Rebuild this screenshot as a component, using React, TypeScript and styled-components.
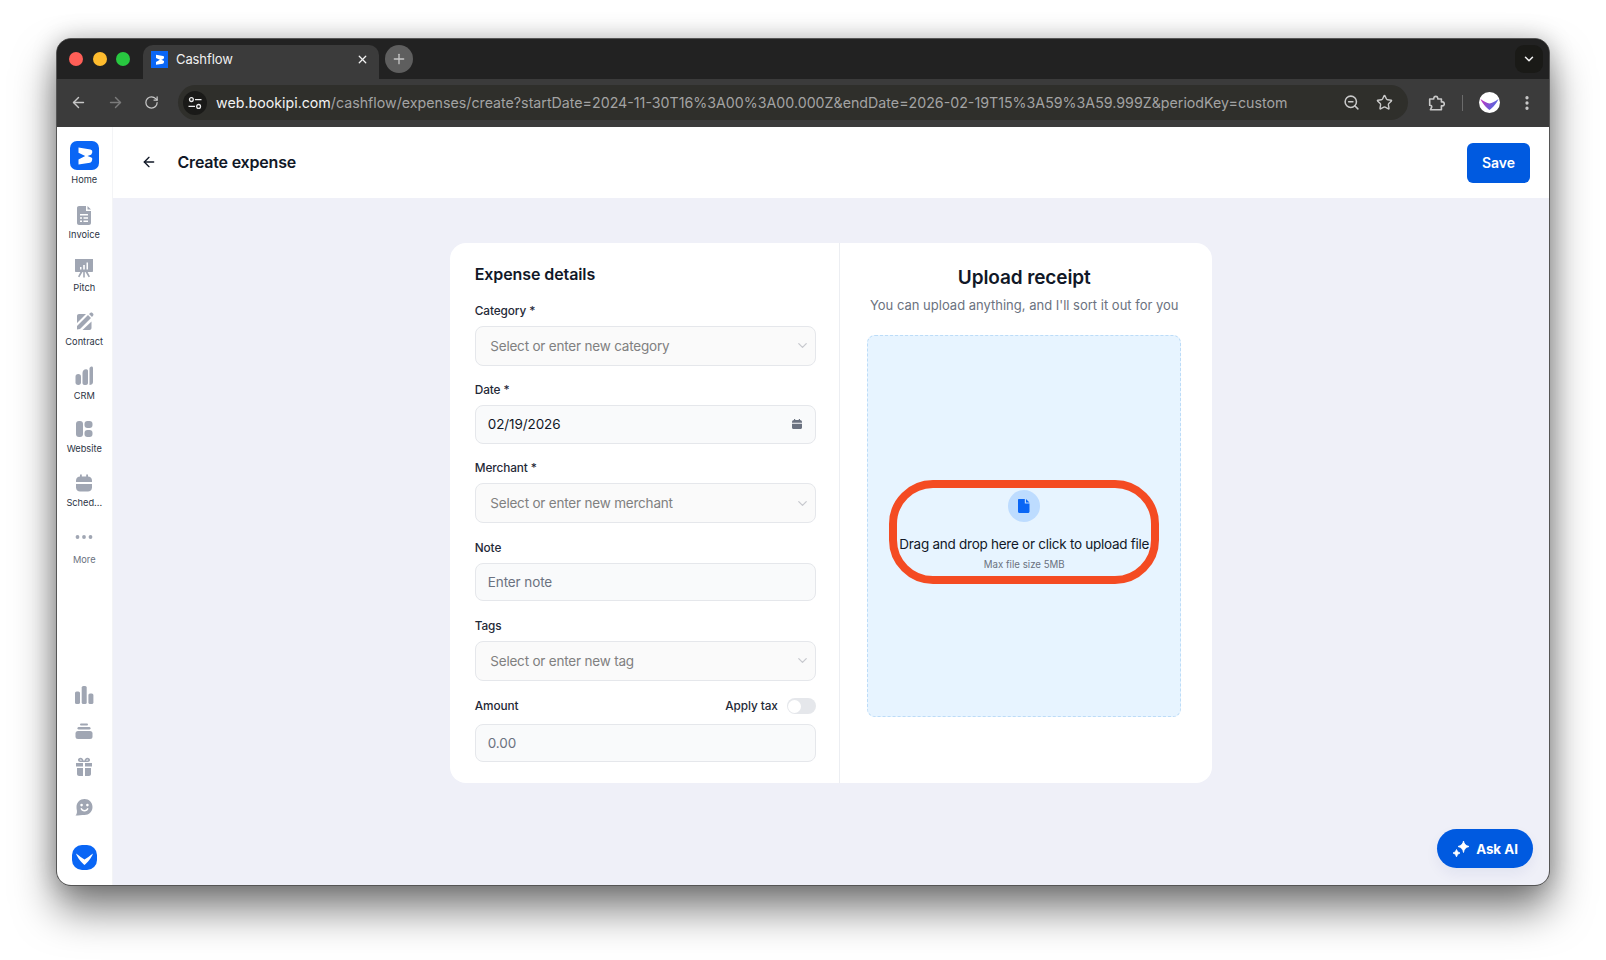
import React from 'react';
import styled, { createGlobalStyle } from 'styled-components';
import {
  ArrowLeft,
  ArrowRight,
  ChevronDown,
  EllipsisVertical,
  Plus,
  RotateCw,
  Star,
  X,
  ZoomOut
} from 'lucide-react';

const GlobalStyle = createGlobalStyle`
  html, body {
    margin: 0;
    padding: 0;
    background: #fff;
    font-family: Inter, "Liberation Sans", sans-serif;
    overflow: hidden;
  }
  * { box-sizing: border-box; }
`;

const URL_HOST = 'web.bookipi.com';
const URL_PATH =
  '/cashflow/expenses/create?startDate=2024-11-30T16%3A00%3A00.000Z&endDate=2026-02-19T15%3A59%3A59.999Z&periodKey=custom';

const BrandMark: React.FC<{ size: number }> = ({ size }) => (
  <svg width={size} height={size} viewBox="0 0 29 29">
    <rect width="29" height="29" rx={size > 20 ? 7 : 0} fill="#0a66f5" />
    <path d="M8.5 6.5L20.5 8.5Q22.8 9 22.3 11.2L21.6 13Q21.2 13.8 20.2 14.1L17.5 15L21.4 16.6Q22.6 17.2 22.2 18.8L21.6 20.5Q21.2 21.6 20 21.8L8.5 23.5V18.6L15.2 15L8.5 11.8Z" fill="#fff" />
  </svg>
);

const ChevronBadge: React.FC = () => (
  <svg width="25" height="25" viewBox="0 0 25 25">
    <rect width="25" height="25" rx="10" fill="#0a66f5" />
    <path d="M4 8.5C7.5 11 10 13 12.5 14.5C15 13 17.5 11 21 8.5C19.5 13 15.5 17.5 12.5 20C9.5 17.5 5.5 13 4 8.5Z" fill="#fff" />
  </svg>
);

const sidebarIcons: Record<string, React.ReactNode> = {
  Invoice: (
    <path
      fillRule="evenodd"
      d="M6 2H13V7H18V19C18 20.1 17.1 21 16 21H6C4.9 21 4 20.1 4 19V4C4 2.9 4.9 2 6 2ZM14.5 2L18 5.5H14.5ZM7 10V11.5H15V10ZM7 13.2V14.7H9V13.2ZM10.5 13.2V14.7H15V13.2ZM7 16.4V17.9H9V16.4ZM10.5 16.4V17.9H15V16.4Z"
    />
  ),
  Pitch: (
    <path
      fillRule="evenodd"
      d="M2 2H20V14C20 14.6 19.6 15 19 15H14.6L17 19.5L15.6 20.2L12.5 15H11.8V20.5H10.2V15H9.5L6.4 20.2L5 19.5L7.4 15H3C2.4 15 2 14.6 2 14ZM7 10V12.5H8.5V10ZM10.2 8V12.5H11.8V8ZM13.5 5.5V12.5H15V5.5Z"
    />
  ),
  Contract: (
    <path d="M4 5C4 3.9 4.9 3 6 3H13L4 12ZM4 15L15 4L18 7L7 18L4 18.5ZM19 6L16 3L17.5 1.8C18 1.4 18.7 1.4 19.2 1.8L20.2 2.8C20.6 3.3 20.6 4 20.2 4.5ZM18.5 10.5V17C18.5 18.1 17.6 19 16.5 19H9.5Z" />
  ),
  CRM: (
    <g>
      <rect x="2.5" y="9" width="5.5" height="11" rx="2.75" />
      <path d="M9.5 8C9.5 5.5 11 4.5 13 4.2C14.2 4 15 4.8 15 6V18C15 19.2 14 20 13 20H11.5C10.4 20 9.5 19.1 9.5 18Z" />
      <path d="M16.5 3.5C16.5 2.5 17.5 1.5 18.5 1.5C19.5 1.5 20 2.2 20 3.2V17C20 19 18.5 20 16.5 20Z" />
    </g>
  ),
  Website: (
    <g>
      <rect x="3" y="3" width="7" height="16" rx="3" />
      <rect x="11.5" y="3" width="8" height="7" rx="3" />
      <rect x="11.5" y="12" width="8" height="7" rx="3" />
    </g>
  ),
  Schedule: (
    <g>
      <path d="M3 8.5C3 6 5 4.5 7 4.5V2.5H8.8V4.5H13.2V2.5H15V4.5C17 4.5 19 6 19 8.5V10H3Z" />
      <path d="M3 12H19V15.5C19 18 17 19.5 15 19.5H7C5 19.5 3 18 3 15.5Z" />
    </g>
  ),
  More: (
    <g>
      <circle cx="4.5" cy="11" r="1.9" />
      <circle cx="11" cy="11" r="1.9" />
      <circle cx="17.5" cy="11" r="1.9" />
    </g>
  )
};

const bottomIcons: { key: string; top: number; icon: React.ReactNode }[] = [
  {
    key: 'stats',
    top: 0,
    icon: (
      <g>
        <rect x="2" y="7.5" width="5" height="12.5" rx="1.6" />
        <rect x="8.7" y="2" width="5" height="18" rx="1.6" />
        <rect x="15.4" y="9.5" width="5" height="10.5" rx="1.6" />
      </g>
    )
  },
  {
    key: 'stack',
    top: 14,
    icon: (
      <g>
        <rect x="7" y="3.5" width="8" height="2" rx="1" />
        <rect x="4.5" y="7" width="13" height="2.5" rx="1.2" />
        <rect x="2.5" y="11" width="17" height="8" rx="2.5" />
      </g>
    )
  },
  {
    key: 'gift',
    top: 14,
    icon: (
      <path
        fillRule="evenodd"
        d="M3 7H10V10.5H3ZM12 7H19V10.5H12ZM4 12H10V20H6C5 20 4 19 4 18ZM12 12H18V18C18 19 17 20 16 20H12ZM7.5 1.8C9.2 1.8 10.4 3.5 11 5.5C11.6 3.5 12.8 1.8 14.5 1.8C16.2 1.8 17.2 3 17 4.3C16.8 5.4 16 6 15 6H7C6 6 5.2 5.4 5 4.3C4.8 3 5.8 1.8 7.5 1.8ZM7.4 3.4C6.7 3.4 6.4 4.4 7.4 4.5H9C8.6 3.9 8 3.4 7.4 3.4ZM14.6 3.4C14 3.4 13.4 3.9 13 4.5H14.6C15.6 4.4 15.3 3.4 14.6 3.4Z"
      />
    )
  },
  {
    key: 'chat',
    top: 18,
    icon: (
      <path
        fillRule="evenodd"
        d="M11.5 3C16 3 19.5 6.5 19.5 11C19.5 15.5 16 19 11.5 19C8.8 19 5.5 19.5 2.5 19.5C3.5 18.5 4.2 17 3.9 14.5C3.6 13.5 3.5 12.2 3.5 11C3.5 6.5 7 3 11.5 3ZM8.6 7.8A1.3 1.3 0 1 0 8.6 10.4A1.3 1.3 0 1 0 8.6 7.8ZM14.4 7.8A1.3 1.3 0 1 0 14.4 10.4A1.3 1.3 0 1 0 14.4 7.8ZM7.4 12.4C8 14.4 9.6 15.4 11.5 15.4C13.4 15.4 15 14.4 15.6 12.4L14.2 12.1C13.7 13.4 12.8 14 11.5 14C10.2 14 9.3 13.4 8.8 12.1Z"
      />
    )
  }
];

const sidebarItems = [
  { label: 'Invoice', icon: 'Invoice' },
  { label: 'Pitch', icon: 'Pitch' },
  { label: 'Contract', icon: 'Contract' },
  { label: 'CRM', icon: 'CRM' },
  { label: 'Website', icon: 'Website' },
  { label: 'Sched...', icon: 'Schedule' },
  { label: 'More', icon: 'More' }
];

const App: React.FC = () => {
  return (
    <>
      <GlobalStyle />
      <Desktop>
        <Window>
          <TabStrip>
            <TrafficLights>
              <Light $color="#ff5f57" />
              <Light $color="#febc2e" />
              <Light $color="#28c840" />
            </TrafficLights>
            <Tab>
              <BrandMark size={17} />
              <TabTitle>Cashflow</TabTitle>
              <X size={13} color="#f2f2f2" strokeWidth={2.4} />
            </Tab>
            <NewTab>
              <Plus size={16} color="#c6c6c6" strokeWidth={2} />
            </NewTab>
            <TabSearch>
              <ChevronDown size={14} color="#f0f0f0" strokeWidth={2.6} />
            </TabSearch>
          </TabStrip>

          <Toolbar>
            <NavButtons>
              <ArrowLeft size={17} color="#c7c7c7" strokeWidth={2} />
              <ArrowRight size={17} color="#7b7b7b" strokeWidth={2} />
              <RotateCw size={15} color="#c7c7c7" strokeWidth={2} />
            </NavButtons>
            <Omnibox>
              <SiteInfo>
                <svg width="14" height="14" viewBox="0 0 14 14" fill="none" stroke="#eee" strokeWidth="1.3">
                  <circle cx="3.4" cy="3.6" r="1.9" />
                  <path d="M7 3.6H13.5M0.5 10.4H7" />
                  <circle cx="10.6" cy="10.4" r="1.9" />
                </svg>
              </SiteInfo>
              <UrlText>
                <UrlHost>{URL_HOST}</UrlHost>
                {URL_PATH}
              </UrlText>
              <OmniIcons>
                <ZoomOut size={17} color="#c9c9c9" strokeWidth={2.2} />
                <Star size={17} color="#c9c9c9" strokeWidth={2} />
              </OmniIcons>
            </Omnibox>
            <ToolbarEnd>
              <svg width="18" height="18" viewBox="0 0 20 20" fill="none" stroke="#c9c9c9" strokeWidth="1.8" strokeLinejoin="round">
                <path d="M3 5.5H7.5V4.5A2.3 2.3 0 0 1 12 4.5V5.5H16V8.8H17A2.2 2.2 0 0 1 17 13.2H16V17.5H3.8L5.2 14.6A1.8 1.8 0 0 0 3 12.5Z" />
              </svg>
              <ToolbarDivider />
              <svg width="21" height="21" viewBox="0 0 21 21">
                <defs>
                  <linearGradient id="avatarFill" x1="0" y1="0" x2="1" y2="0.4">
                    <stop offset="0" stopColor="#c92fc0" />
                    <stop offset="1" stopColor="#4f6ce0" />
                  </linearGradient>
                </defs>
                <circle cx="10.5" cy="10.5" r="10.5" fill="#fff" />
                <path d="M1.5 7C5 9.5 8 11 10.5 11.5C13 11 16 9.5 19.5 7C18 11 14 15.5 10.5 18C7 15.5 3 11 1.5 7Z" fill="url(#avatarFill)" />
              </svg>
              <KebabSlot>
                <EllipsisVertical size={18} color="#c9c9c9" strokeWidth={2.4} />
              </KebabSlot>
            </ToolbarEnd>
          </Toolbar>

          <AppBody>
            <Sidebar>
              <HomeItem>
                <BrandMark size={29} />
                <NavLabel>Home</NavLabel>
              </HomeItem>
              {sidebarItems.map((item) => (
                <NavItem key={item.label}>
                  <NavIcon viewBox="0 0 22 22">{sidebarIcons[item.icon]}</NavIcon>
                  <NavLabel $muted={item.label === 'More'}>{item.label}</NavLabel>
                </NavItem>
              ))}
              <SidebarBottom>
                {bottomIcons.map((item) => (
                  <BottomIcon key={item.key} $top={item.top} viewBox="0 0 22 22">
                    {item.icon}
                  </BottomIcon>
                ))}
                <BadgeSlot>
                  <ChevronBadge />
                </BadgeSlot>
              </SidebarBottom>
            </Sidebar>

            <Main>
              <PageHeader>
                <HeaderTitle>
                  <ArrowLeft size={16} color="#111827" strokeWidth={2} />
                  <PageTitle>Create expense</PageTitle>
                </HeaderTitle>
                <SaveButton>Save</SaveButton>
              </PageHeader>

              <Content>
                <Card>
                  <DetailsColumn>
                    <SectionTitle>Expense details</SectionTitle>
                    <Fields>
                      <Field>
                        <FieldLabel>Category *</FieldLabel>
                        <SelectBox>
                          <span>Select or enter new category</span>
                          <ChevronDown size={15} color="#c7c9ce" />
                        </SelectBox>
                      </Field>
                      <Field>
                        <FieldLabel>Date *</FieldLabel>
                        <InputBox $filled>
                          <span>02/19/2026</span>
                          <svg width="12" height="12" viewBox="0 0 12 12" fill="#6b7280">
                            <path d="M1 4C1 2.9 1.9 2 3 2V1H4.2V2H7.8V1H9V2C10.1 2 11 2.9 11 4V4.8H1ZM1 5.8H11V9.5C11 10.4 10.4 11 9.5 11H2.5C1.6 11 1 10.4 1 9.5Z" />
                          </svg>
                        </InputBox>
                      </Field>
                      <Field>
                        <FieldLabel>Merchant *</FieldLabel>
                        <SelectBox>
                          <span>Select or enter new merchant</span>
                          <ChevronDown size={15} color="#c7c9ce" />
                        </SelectBox>
                      </Field>
                      <Field>
                        <FieldLabel>Note</FieldLabel>
                        <InputBox>
                          <span>Enter note</span>
                        </InputBox>
                      </Field>
                      <Field>
                        <FieldLabel>Tags</FieldLabel>
                        <SelectBox>
                          <span>Select or enter new tag</span>
                          <ChevronDown size={15} color="#c7c9ce" />
                        </SelectBox>
                      </Field>
                      <Field>
                        <AmountRow>
                          <FieldLabel>Amount</FieldLabel>
                          <TaxToggle>
                            <FieldLabel>Apply tax</FieldLabel>
                            <Switch>
                              <SwitchKnob />
                            </Switch>
                          </TaxToggle>
                        </AmountRow>
                        <InputBox>
                          <span>0.00</span>
                        </InputBox>
                      </Field>
                    </Fields>
                  </DetailsColumn>

                  <UploadColumn>
                    <UploadTitle>Upload receipt</UploadTitle>
                    <UploadHint>You can upload anything, and I'll sort it out for you</UploadHint>
                    <DropZone>
                      <FileBadge>
                        <svg width="14" height="16" viewBox="0 0 14 16" fill="#0a66f5">
                          <path d="M2 1H7.8V5.5H12.5V13.5C12.5 14.4 11.9 15 11 15H2.5C1.6 15 1 14.4 1 13.5V2C1 1.4 1.4 1 2 1ZM9 1L12.5 4.4H9Z" />
                        </svg>
                      </FileBadge>
                      <DropText>Drag and drop here or click to upload file</DropText>
                      <DropNote>Max file size 5MB</DropNote>
                      <Highlight />
                    </DropZone>
                  </UploadColumn>
                </Card>
              </Content>

              <AskButton>
                <svg width="18" height="18" viewBox="0 0 18 18" fill="#fff">
                  <path d="M11.5 1Q12.2 5.3 17 6.5Q12.2 7.7 11.5 12.5Q10.8 7.7 6 6.5Q10.8 5.3 11.5 1Z" stroke="#fff" strokeWidth="0.8" strokeLinejoin="round" />
                  <path d="M4.5 9.5Q5 12.3 8 13Q5 13.7 4.5 16.8Q4 13.7 1 13Q4 12.3 4.5 9.5Z" stroke="#fff" strokeWidth="0.8" strokeLinejoin="round" />
                </svg>
                Ask AI
              </AskButton>
            </Main>
          </AppBody>
        </Window>
      </Desktop>
    </>
  );
};

const Desktop = styled.div`
  width: 1606px;
  height: 960px;
  padding: 38px 56px 74px 56px;
`;

const Window = styled.div`
  width: 100%;
  height: 100%;
  display: flex;
  flex-direction: column;
  border: 1px solid #555;
  border-radius: 15px;
  overflow: hidden;
  background: #222;
  box-shadow: 0 24px 42px rgba(0, 0, 0, 0.5), 0 0 24px rgba(0, 0, 0, 0.22);
`;

const TabStrip = styled.div`
  height: 40px;
  flex: none;
  display: flex;
  align-items: flex-start;
  padding: 6px 6px 0 12px;
  background: #222222;
`;

const TrafficLights = styled.div`
  display: flex;
  gap: 9.5px;
  padding-top: 7px;
  width: 74px;
`;

const Light = styled.span<{ $color: string }>`
  width: 14px;
  height: 14px;
  border-radius: 50%;
  background: ${(p) => p.$color};
`;

const Tab = styled.div`
  width: 236px;
  height: 34px;
  display: flex;
  align-items: center;
  padding: 0 10px 6px 8px;
  border-radius: 10px 10px 0 0;
  background: #3b3b3b;
`;

const TabTitle = styled.span`
  flex: 1;
  margin-left: 8px;
  font-size: 13px;
  letter-spacing: -0.1px;
  color: #f0f0f0;
`;

const NewTab = styled.div`
  width: 28px;
  height: 28px;
  margin-left: 6px;
  display: flex;
  align-items: center;
  justify-content: center;
  border-radius: 50%;
  background: #5e5e5e;
`;

const TabSearch = styled.div`
  width: 28px;
  height: 28px;
  margin-left: auto;
  display: flex;
  align-items: center;
  justify-content: center;
  border-radius: 9px;
  background: #1a1a17;
`;

const Toolbar = styled.div`
  height: 48px;
  flex: none;
  display: flex;
  align-items: center;
  padding-bottom: 1px;
  background: #3b3b3b;
`;

const NavButtons = styled.div`
  width: 121px;
  display: flex;
  align-items: center;
  gap: 20px;
  padding-left: 13px;
`;

const Omnibox = styled.div`
  width: 1230px;
  height: 35px;
  display: flex;
  align-items: center;
  padding: 0 15px 0 5px;
  border-radius: 18px;
  background: #2f2f2b;
`;

const SiteInfo = styled.div`
  width: 24px;
  height: 24px;
  flex: none;
  display: flex;
  align-items: center;
  justify-content: center;
  border-radius: 50%;
  background: #1a1a18;
`;

const UrlText = styled.div`
  flex: 1;
  margin-left: 9px;
  font-size: 14.22px;
  color: #a3a3a3;
  white-space: nowrap;
`;

const UrlHost = styled.span`
  color: #f2f2f2;
`;

const OmniIcons = styled.div`
  display: flex;
  align-items: center;
  gap: 16px;
`;

const ToolbarEnd = styled.div`
  flex: 1;
  display: flex;
  align-items: center;
  padding-left: 19px;
`;

const ToolbarDivider = styled.span`
  width: 1px;
  height: 16px;
  margin: 0 16px 0 17px;
  background: #6b6b6b;
`;

const KebabSlot = styled.div`
  display: flex;
  margin-left: 18px;
`;

const AppBody = styled.div`
  flex: 1;
  min-height: 0;
  display: flex;
`;

const Sidebar = styled.nav`
  width: 55.5px;
  flex: none;
  display: flex;
  flex-direction: column;
  align-items: center;
  padding: 14px 0 15px;
  background: #fff;
  border-right: 1px solid #f3f4f6;
`;

const HomeItem = styled.div`
  display: flex;
  flex-direction: column;
  align-items: center;
  gap: 4px;
  margin-bottom: 17.5px;
`;

const NavItem = styled.div`
  height: 53.7px;
  flex: none;
  display: flex;
  flex-direction: column;
  align-items: center;
  gap: 3px;
`;

const NavIcon = styled.svg`
  width: 22px;
  height: 22px;
  flex: none;
  fill: #a0a6b3;
`;

const NavLabel = styled.span<{ $muted?: boolean }>`
  font-size: 9.25px;
  line-height: 12px;
  white-space: nowrap;
  color: ${(p) => (p.$muted ? '#6b7280' : '#2b3444')};
  margin-top: ${(p) => (p.$muted ? '3px' : '0')};
`;

const SidebarBottom = styled.div`
  margin-top: auto;
  display: flex;
  flex-direction: column;
  align-items: center;
`;

const BottomIcon = styled.svg<{ $top: number }>`
  width: 22px;
  height: 22px;
  flex: none;
  fill: #a0a6b3;
  margin-top: ${(p) => p.$top}px;
`;

const BadgeSlot = styled.div`
  display: flex;
  margin-top: 27px;
`;

const Main = styled.main`
  position: relative;
  flex: 1;
  min-width: 0;
  display: flex;
  flex-direction: column;
  background: #eff0f8;
`;

const PageHeader = styled.header`
  height: 71px;
  flex: none;
  display: flex;
  align-items: center;
  justify-content: space-between;
  padding: 0 19px 0 28px;
  background: #fff;
`;

const HeaderTitle = styled.div`
  display: flex;
  align-items: center;
  gap: 21px;
  padding-bottom: 1px;
`;

const PageTitle = styled.h1`
  margin: 0;
  font-size: 16px;
  letter-spacing: -0.2px;
  font-weight: 600;
  color: #111827;
`;

const SaveButton = styled.button`
  width: 63px;
  height: 40px;
  border: none;
  border-radius: 6px;
  background: #005ae0;
  color: #fff;
  font-family: inherit;
  font-size: 14px;
  font-weight: 600;
`;

const Content = styled.div`
  flex: 1;
  display: flex;
  justify-content: center;
  align-items: flex-start;
  padding: 45px 0 0 1px;
`;

const Card = styled.section`
  width: 762px;
  height: 540px;
  display: flex;
  border-radius: 16px;
  background: #fff;
`;

const DetailsColumn = styled.div`
  width: 389.5px;
  flex: none;
  padding: 19px 23px 0 24.5px;
  border-right: 1px solid #eceef2;
`;

const SectionTitle = styled.h2`
  margin: 0 0 16.5px;
  font-size: 16px;
  line-height: 24px;
  letter-spacing: -0.1px;
  font-weight: 600;
  color: #111827;
`;

const Fields = styled.div`
  display: flex;
  flex-direction: column;
  gap: 16.6px;
`;

const Field = styled.div`
  display: flex;
  flex-direction: column;
  gap: 7px;
`;

const FieldLabel = styled.label`
  font-size: 11.8px;
  line-height: 16px;
  letter-spacing: -0.1px;
  font-weight: 500;
  color: #1f2937;
`;

const SelectBox = styled.div`
  height: 40px;
  display: flex;
  align-items: center;
  justify-content: space-between;
  padding: 0 5px 0 14.5px;
  border: 1px solid #e5e7eb;
  border-radius: 8px;
  background: #fafafa;
  font-size: 13.5px;
  letter-spacing: -0.2px;
  color: #808080;
`;

const InputBox = styled.div<{ $filled?: boolean }>`
  height: 38.5px;
  display: flex;
  align-items: center;
  justify-content: space-between;
  padding: 0 12px 0 12px;
  border: 1px solid #e5e7eb;
  border-radius: 8px;
  background: #f9fafb;
  font-size: 13.5px;
  letter-spacing: -0.1px;
  color: ${(p) => (p.$filled ? '#111827' : '#6b7280')};
`;

const AmountRow = styled.div`
  display: flex;
  align-items: center;
  justify-content: space-between;
  padding-top: 1px;
  margin-bottom: 2.5px;
`;

const TaxToggle = styled.div`
  display: flex;
  align-items: center;
  gap: 9px;
`;

const Switch = styled.div`
  width: 29px;
  height: 16px;
  padding: 1.5px;
  border-radius: 8px;
  background: #e5e7eb;
`;

const SwitchKnob = styled.div`
  width: 13px;
  height: 13px;
  border-radius: 50%;
  background: #fff;
`;

const UploadColumn = styled.div`
  flex: 1;
  display: flex;
  flex-direction: column;
  align-items: center;
  padding: 21px 3.5px 0 0;
`;

const UploadTitle = styled.h2`
  margin: 0;
  font-size: 19px;
  line-height: 28px;
  letter-spacing: -0.1px;
  font-weight: 600;
  color: #111827;
`;

const UploadHint = styled.p`
  margin: 3px 0 0;
  font-size: 13px;
  line-height: 20px;
  color: #6b7280;
`;

const DropZone = styled.div`
  position: relative;
  width: 314px;
  height: 382px;
  margin-top: 20px;
  display: flex;
  flex-direction: column;
  align-items: center;
  padding-top: 154px;
  border: 1px dashed #bcdcf8;
  border-radius: 8px;
  background: #e7f4ff;
`;

const FileBadge = styled.div`
  width: 32px;
  height: 32px;
  display: flex;
  align-items: center;
  justify-content: center;
  border-radius: 50%;
  background: #bddcff;
`;

const DropText = styled.div`
  margin-top: 12px;
  font-size: 13.5px;
  line-height: 20px;
  letter-spacing: -0.26px;
  white-space: nowrap;
  color: #111827;
`;

const DropNote = styled.div`
  margin-top: 4px;
  font-size: 9.7px;
  line-height: 14px;
  color: #6b7280;
`;

const Highlight = styled.div`
  position: absolute;
  left: 21px;
  top: 144px;
  width: 270px;
  height: 104px;
  border: 8px solid #f44b22;
  border-radius: 44px;
`;

const AskButton = styled.button`
  position: absolute;
  right: 16px;
  bottom: 17px;
  width: 96px;
  height: 39px;
  display: flex;
  align-items: center;
  justify-content: center;
  gap: 6px;
  border: none;
  border-radius: 20px;
  background: #005ae0;
  color: #fff;
  font-family: inherit;
  font-size: 13.3px;
  font-weight: 700;
  box-shadow: 0 6px 14px rgba(0, 40, 120, 0.06);
`;

export default App;
